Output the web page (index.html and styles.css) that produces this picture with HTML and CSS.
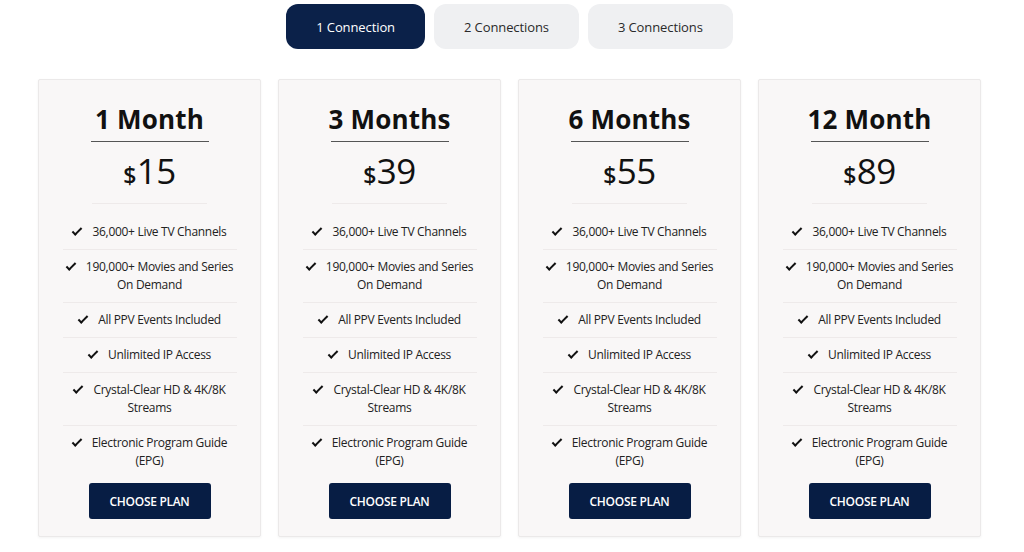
FILE: index.html
```html
<!DOCTYPE html>
<html>
<head>
<meta charset="utf-8">
<link rel="stylesheet" href="styles.css">
</head>
<body>
<div class="tabs">
  <button class="tab active">1 Connection</button>
  <button class="tab">2 Connections</button>
  <button class="tab">3 Connections</button>
</div>
<div class="plans">
  <div class="card">
    <h2 class="title">1 Month</h2>
    <div class="rule"></div>
    <div class="price"><span class="cur">$</span>15</div>
    <ul class="features">
      <li><span class="ck"></span>36,000+ Live TV Channels</li>
      <li><span class="ck"></span>190,000+ Movies and Series On Demand</li>
      <li><span class="ck"></span>All PPV Events Included</li>
      <li><span class="ck"></span>Unlimited IP Access</li>
      <li><span class="ck"></span>Crystal-Clear HD &amp; 4K/8K Streams</li>
      <li><span class="ck"></span>Electronic Program Guide (EPG)</li>
    </ul>
    <a class="choose">CHOOSE PLAN</a>
  </div>
  <div class="card">
    <h2 class="title">3 Months</h2>
    <div class="rule"></div>
    <div class="price"><span class="cur">$</span>39</div>
    <ul class="features">
      <li><span class="ck"></span>36,000+ Live TV Channels</li>
      <li><span class="ck"></span>190,000+ Movies and Series On Demand</li>
      <li><span class="ck"></span>All PPV Events Included</li>
      <li><span class="ck"></span>Unlimited IP Access</li>
      <li><span class="ck"></span>Crystal-Clear HD &amp; 4K/8K Streams</li>
      <li><span class="ck"></span>Electronic Program Guide (EPG)</li>
    </ul>
    <a class="choose">CHOOSE PLAN</a>
  </div>
  <div class="card">
    <h2 class="title">6 Months</h2>
    <div class="rule"></div>
    <div class="price"><span class="cur">$</span>55</div>
    <ul class="features">
      <li><span class="ck"></span>36,000+ Live TV Channels</li>
      <li><span class="ck"></span>190,000+ Movies and Series On Demand</li>
      <li><span class="ck"></span>All PPV Events Included</li>
      <li><span class="ck"></span>Unlimited IP Access</li>
      <li><span class="ck"></span>Crystal-Clear HD &amp; 4K/8K Streams</li>
      <li><span class="ck"></span>Electronic Program Guide (EPG)</li>
    </ul>
    <a class="choose">CHOOSE PLAN</a>
  </div>
  <div class="card">
    <h2 class="title">12 Month</h2>
    <div class="rule"></div>
    <div class="price"><span class="cur">$</span>89</div>
    <ul class="features">
      <li><span class="ck"></span>36,000+ Live TV Channels</li>
      <li><span class="ck"></span>190,000+ Movies and Series On Demand</li>
      <li><span class="ck"></span>All PPV Events Included</li>
      <li><span class="ck"></span>Unlimited IP Access</li>
      <li><span class="ck"></span>Crystal-Clear HD &amp; 4K/8K Streams</li>
      <li><span class="ck"></span>Electronic Program Guide (EPG)</li>
    </ul>
    <a class="choose">CHOOSE PLAN</a>
  </div>
</div>
</body>
</html>
```
FILE: styles.css
```css
* { box-sizing: border-box; }
html, body { margin: 0; padding: 0; background: #fff; }
body {
  font-family: "Open Sans", "Noto Sans", sans-serif;
  color: #1b1b1b;
  width: 1024px;
  height: 552px;
  overflow: hidden;
}
.tabs {
  display: flex;
  justify-content: center;
  gap: 9px;
  padding-top: 4px;
  padding-right: 5px;
}
.tab {
  height: 45px;
  border: none;
  border-radius: 12px;
  background: #eff0f2;
  color: #2a2a2a;
  font-family: inherit;
  font-size: 13px;
  padding: 0 30px;
  letter-spacing: -0.1px;
}
.tab.active {
  background: #0b2149;
  color: #fff;
}
.plans {
  display: flex;
  gap: 17px;
  padding-left: 38px;
  margin-top: 30px;
}
.card {
  width: 223px;
  height: 458px;
  background: #f9f7f7;
  border: 1px solid #ebe9e9;
  box-shadow: 0 1px 3px rgba(0,0,0,0.05);
  border-radius: 2px;
  padding: 23px 24px 0;
  display: flex;
  flex-direction: column;
  align-items: center;
}
.title {
  margin: 0;
  font-size: 26px;
  font-weight: 700;
  line-height: 32px;
  color: #111;
  letter-spacing: 0.2px;
}
.rule {
  width: 118px;
  height: 1px;
  background: #555;
  margin-top: 6px;
}
.price {
  margin-top: 7px;
  font-size: 35px;
  line-height: 44px;
  color: #111;
  width: 115px;
  text-align: center;
  padding-bottom: 6px;
  border-bottom: 1px solid #eeeaea;
  letter-spacing: -0.5px;
}
.cur {
  font-size: 23px;
  font-weight: 600;
  margin-right: 1px;
}
.features {
  list-style: none;
  margin: 11px 0 0;
  padding: 0;
  width: 174px;
}
.features li {
  font-size: 12px;
  line-height: 18px;
  padding: 8px 0;
  text-align: center;
  border-bottom: 1px solid #eeeaea;
  color: #222;
  letter-spacing: -0.3px;
}
.features li:last-child { border-bottom: none; }
.ck {
  display: inline-block;
  width: 10px;
  height: 5px;
  border-left: 2.5px solid #111;
  border-bottom: 2.5px solid #111;
  transform: rotate(-45deg);
  margin-right: 10px;
  vertical-align: 3px;
}
.choose {
  margin-top: 5px;
  display: flex;
  align-items: center;
  justify-content: center;
  width: 122px;
  height: 36px;
  background: #071d44;
  color: #fff;
  border-radius: 3px;
  font-size: 12px;
  font-weight: 600;
  letter-spacing: -0.3px;
}
```
